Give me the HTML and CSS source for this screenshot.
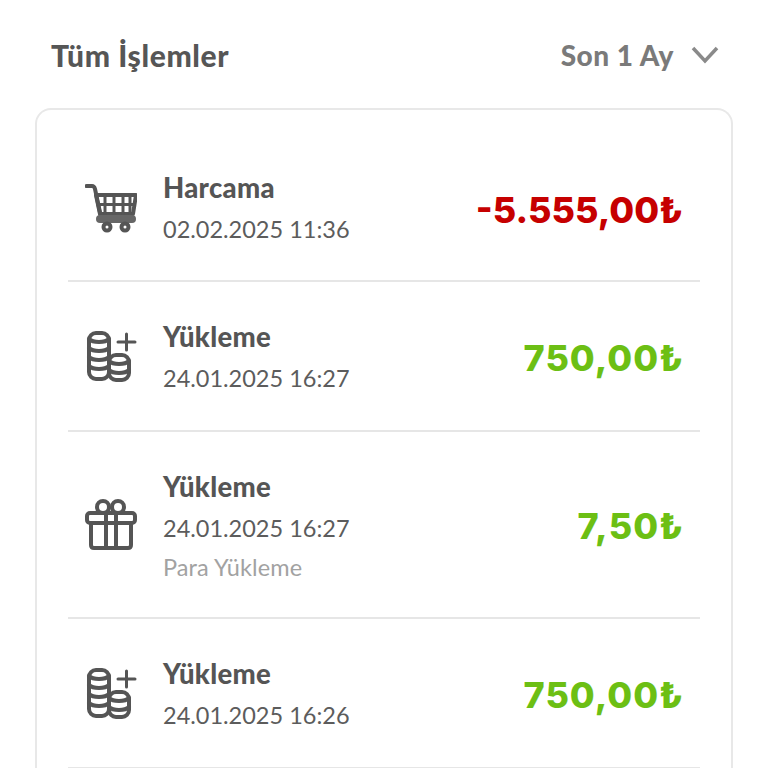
FILE: index.html
```html
<!DOCTYPE html>
<html lang="tr">
<head>
<meta charset="utf-8">
<title>Tüm İşlemler</title>
<link rel="stylesheet" href="styles.css">
</head>
<body>
<main class="page">
  <header class="head">
    <h1 class="title">Tüm İşlemler</h1>
    <div class="filter">
      <span>Son 1 Ay</span>
      <svg class="chev" viewBox="0 0 28 18"><path d="M2 2l12 13L26 2"/></svg>
    </div>
  </header>
  <section class="card">
    <div class="row first">
      <svg class="icon" viewBox="0 0 52 52"><g class="st"><path d="M1.500 4H7c1.500 0 2.500 1 3 3l6 28"/><path d="M11 13h40l-3 19H15z"/><path class="thin" d="M13 22.500h36M20 13v19M29 13v19M38 13v19M45 13v19"/><path class="bar" d="M15 37h32"/><circle cx="22" cy="45" r="3.500"/><circle cx="40" cy="45" r="3.500"/></g></svg>
      <div class="info"><div class="name">Harcama</div><div class="date">02.02.2025 11:36</div></div>
      <div class="amount neg">-5.555,00₺</div>
    </div>
    <div class="row">
      <svg class="icon" viewBox="0 0 52 52"><use href="#coins"/></svg>
      <div class="info"><div class="name">Yükleme</div><div class="date">24.01.2025 16:27</div></div>
      <div class="amount pos">750,00₺</div>
    </div>
    <div class="row tall">
      <svg class="icon" viewBox="0 0 52 52"><g class="st"><circle cx="18" cy="8" r="6"/><circle cx="33" cy="8" r="6"/><rect class="solid" x="2" y="14" width="48" height="10" rx="3"/><path d="M6 24v22c0 2 1 3 3 3h34c2 0 3-1 3-3V24M21 14v35M31 14v35"/></g></svg>
      <div class="info"><div class="name">Yükleme</div><div class="date">24.01.2025 16:27</div><div class="note">Para Yükleme</div></div>
      <div class="amount pos">7,50₺</div>
    </div>
    <div class="row">
      <svg class="icon" viewBox="0 0 52 52">
        <defs><g id="coins" class="st"><rect x="4" y="3" width="20" height="46" rx="7"/><path d="M4 9c4 4 16 4 20 0M4 18c4 4 16 4 20 0M4 27c4 4 16 4 20 0M4 36c4 4 16 4 20 0"/><rect class="solid" x="24" y="25" width="20" height="25" rx="7"/><path d="M24 31c4 4 16 4 20 0M24 40c4 4 16 4 20 0"/><path class="plus" d="M33 12h17M41.500 4v16"/></g></defs>
        <use href="#coins"/>
      </svg>
      <div class="info"><div class="name">Yükleme</div><div class="date">24.01.2025 16:26</div></div>
      <div class="amount pos">750,00₺</div>
    </div>
  </section>
</main>
</body>
</html>
```
FILE: styles.css
```css
* { box-sizing: border-box; }
html, body { margin: 0; height: 768px; overflow: hidden; background: #fff; }
body { font-family: Lato, "Open Sans", sans-serif; color: #555; }
.page { padding: 0 35px; }
.head { height: 108px; display: flex; align-items: center; justify-content: space-between; padding: 2px 14px 0 16px; }
.title { margin: 0; font-size: 30px; font-weight: 900; letter-spacing: 0.6px; color: #565656; }
.filter { display: flex; align-items: center; gap: 17px; font-size: 28px; font-weight: 900; letter-spacing: 0.5px; color: #7a7a7a; }
.chev { width: 28px; height: 18px; fill: none; stroke: #8a8a8a; stroke-width: 3.500; }
.card { border: 2px solid #e8e8e8; border-bottom: 0; border-radius: 16px 16px 0 0; padding: 0 31px; height: 700px; background: #fff; overflow: hidden; }
.row { height: 150px; border-bottom: 2px solid #e6e6e6; display: flex; align-items: center; padding: 0 17px; }
.first { height: 172px; padding-top: 26px; }
.first .info { padding-top: 0; }
.tall { height: 187px; }
.icon { width: 52px; height: 52px; flex: none; margin-right: 26px; }
.st { fill: none; stroke: #555; stroke-width: 4; stroke-linecap: round; stroke-linejoin: round; }
.thin { stroke-width: 3; }
.bar { stroke-width: 8; stroke: #666; }
.solid { fill: #fff; }
.plus { stroke-width: 3; }
.info { flex: 1; padding-top: 3px; }
.name { font-size: 27.500px; font-weight: 900; letter-spacing: 0.3px; line-height: 34px; color: #555; }
.date { font-size: 23.500px; line-height: 34px; margin-top: 7px; color: #5c5c5c; }
.note { font-size: 23.500px; line-height: 30px; margin-top: 7px; letter-spacing: 0.1px; color: #a2a2a2; }
.amount { font-family: Inter, Lato, sans-serif; font-size: 36px; font-weight: 800; padding-top: 3px; }
.neg { color: #c60000; }
.pos { color: #6cbf14; letter-spacing: 1px; margin-right: -1px; }
```
